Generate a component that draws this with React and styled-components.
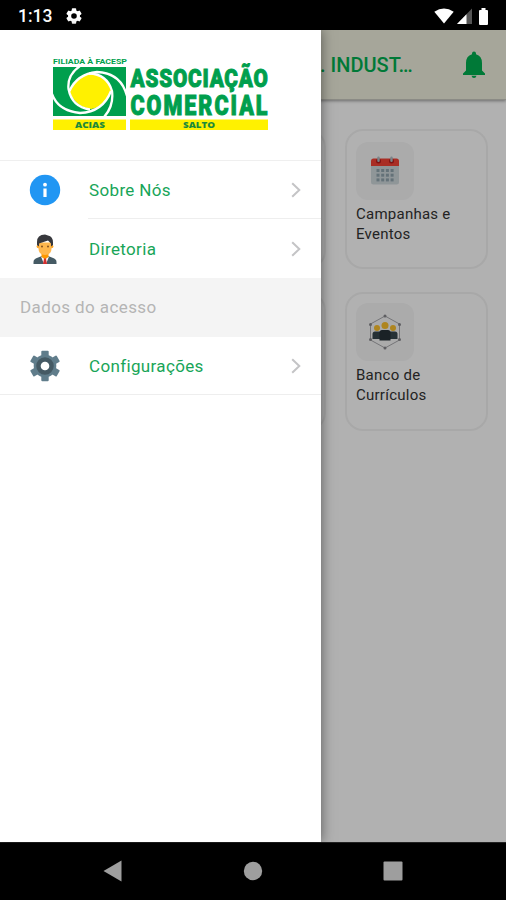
import React from 'react'
import styled, { createGlobalStyle } from 'styled-components'

const GlobalStyle = createGlobalStyle`
  * {
    box-sizing: border-box;
  }
  body {
    margin: 0;
    background: #000;
    font-family: Roboto, 'Liberation Sans', sans-serif;
  }
`

const Phone = styled.div`
  display: flex;
  flex-direction: column;
  width: 506px;
  height: 900px;
  overflow: hidden;
  background: #000;
`

const StatusBar = styled.header`
  display: flex;
  align-items: center;
  flex: 0 0 30px;
  padding: 2px 16px 0 18px;
  color: #fff;
`

const Clock = styled.span`
  width: 48px;
  font-size: 17.5px;
  font-weight: 500;
  line-height: 28px;
`

const StatusIcons = styled.div`
  display: flex;
  align-items: center;
  gap: 2.5px;
  margin-left: auto;
`

const Screen = styled.div`
  position: relative;
  flex: 1;
  background: #fff;
`

const AppBar = styled.div`
  display: flex;
  align-items: center;
  justify-content: flex-end;
  height: 70px;
  padding-right: 20px;
  background: #eff0de;
  border-bottom: 1px solid #c8c8c0;
  box-shadow: 0 1px 3px rgba(0, 0, 0, 0.4);
`

const AppTitle = styled.h1`
  width: 93px;
  margin: 0 49px 0 0;
  color: #00af50;
  font-size: 20px;
  font-weight: 500;
  line-height: 24px;
  white-space: nowrap;
`

const Cards = styled.div`
  display: grid;
  grid-template-columns: repeat(3, 143px);
  grid-template-rows: 140px 139px;
  justify-content: end;
  gap: 23px 19px;
  padding: 29px 18px;
`

const Card = styled.div`
  padding: ${p => (p.$tight ? 10 : 12)}px 9px;
  border: 2px solid #f3f3f3;
  border-radius: 18px;
`

const CardIcon = styled.div`
  display: flex;
  align-items: center;
  justify-content: center;
  width: 58px;
  height: 58px;
  margin: -1px 0 5px 0;
  border-radius: 12px;
  background: #f6f6f7;
`

const CardLabel = styled.div`
  color: #333;
  font-size: 15px;
  line-height: 19.5px;
  letter-spacing: 0.25px;
`

const Scrim = styled.div`
  position: absolute;
  inset: 0;
  background: rgba(0, 0, 0, 0.305);
`

const Drawer = styled.aside`
  position: absolute;
  top: 0;
  bottom: 0;
  left: 0;
  width: 320.5px;
  background: #fff;
  box-shadow: 0 0 12px rgba(0, 0, 0, 0.5);
`

const LogoArea = styled.div`
  height: 131px;
  padding: 22px 0 0 50px;
  border-bottom: 1px solid #efefef;
`

const Row = styled.div`
  display: flex;
  align-items: center;
  height: ${p => p.$height || 58}px;
  padding-left: 29px;
`

const RowIcon = styled.div`
  display: flex;
  width: 59px;
`

const RowBody = styled.div`
  display: flex;
  align-items: center;
  justify-content: space-between;
  flex: 1;
  height: 100%;
  padding: 1px 20px 0 1px;
  border-bottom: 1px solid ${p => (p.$line ? '#eee' : 'transparent')};
`

const RowLabel = styled.span`
  color: #18a558;
  font-size: 17px;
  letter-spacing: 0.35px;
`

const Section = styled.div`
  height: 59px;
  padding-left: 20px;
  background: #f4f4f4;
  color: #b5b5b5;
  font-size: 17px;
  line-height: 59px;
  letter-spacing: 0.4px;
`

const Divider = styled.div`
  height: 1px;
  background: #eee;
`

const NavBar = styled.nav`
  display: flex;
  align-items: center;
  justify-content: space-between;
  flex: 0 0 58px;
  padding: 0 103px 2px;
  border-top: 1px solid #222;
`

const teeth = [0, 60, 120, 180, 240, 300]

const SettingsDot = () => (
  <svg width="16" height="16" viewBox="0 0 16 16">
    <g fill="#fff">
      {teeth.map(a => (
        <rect key={a} x="5.8" y="0.3" width="4.4" height="4" rx="0.8" transform={`rotate(${a} 8 8)`} />
      ))}
    </g>
    <circle cx="8" cy="8" r="4.4" fill="none" stroke="#fff" strokeWidth="3.2" />
  </svg>
)

const Wifi = () => (
  <svg width="20" height="16" viewBox="0 0 20 16">
    <path d="M0.3 3.8Q10-2.8 19.7 3.8L10 15.6Z" fill="#fff" />
  </svg>
)

const Signal = () => (
  <svg width="15" height="16" viewBox="0 0 15 16">
    <path d="M0 16L15 0.5V16Z" fill="#555" />
    <path d="M0 16L9.5 6.2V16Z" fill="#fff" />
  </svg>
)

const Battery = () => (
  <svg width="16" height="17" viewBox="0 0 16 17">
    <path d="M7.500 0h4v2h1.500q1 0 1 1v13q0 1-1 1H6q-1 0-1-1V3q0-1 1-1h1.500Z" fill="#fff" />
  </svg>
)

const Bell = () => (
  <svg width="24" height="28" viewBox="0 0 24 28">
    <path d="M12 0.500q2 0 2 2v0.800q6 1.700 6 8.700v7.500l3 3V24H1v-1.500l3-3V12q0-7 6-8.700v-0.800q0-2 2-2Z" fill="#00af50" />
    <path d="M9.500 24.800h5q-0.500 2.300-2.500 2.300t-2.500-2.300Z" fill="#00af50" />
  </svg>
)

const Logo = () => (
  <svg width="222" height="84" viewBox="50 52 222 84">
    <defs>
      <clipPath id="emblem">
        <rect x="53" y="67" width="73" height="49" />
      </clipPath>
    </defs>
    <g fill="#009f4d" fontFamily="Roboto, sans-serif" fontWeight="900">
      <text x="53" y="64" fontSize="7.500" fontWeight="700" textLength="74" lengthAdjust="spacingAndGlyphs">FILIADA À FACESP</text>
      <rect x="53" y="67" width="73" height="49" />
      <g stroke="#009f4d" strokeWidth="1">
        <text x="130.500" y="87" fontSize="26.500" letterSpacing="1" textLength="138" lengthAdjust="spacingAndGlyphs">ASSOCIAÇÃO</text>
        <text x="130.500" y="115" fontSize="27" letterSpacing="2.500" textLength="139" lengthAdjust="spacingAndGlyphs">COMERCIAL</text>
      </g>
    </g>
    <g clipPath="url(#emblem)">
      <path d="M69.500 92Q76 77 89 73.500Q105 72 111.500 91Q104 107 91 109Q76 107 69.500 92Z" fill="#fff100" />
      <g fill="none" stroke="#fff" strokeWidth="2.300">
        <path d="M80 66Q67 75 68.500 89Q72 107 90 109.500" />
        <path d="M52 94Q58 111 80 113Q103 112 111 91" />
        <path d="M69.500 91Q77 74 97 72Q121 73 127 96" />
        <path d="M89 73.500Q107 74 112 91Q114 106 104 117" />
      </g>
    </g>
    <rect x="53" y="119.500" width="73" height="10.500" fill="#fff100" />
    <rect x="130" y="119.500" width="138" height="10.500" fill="#fff100" />
    <g fill="#1d8a3a" fontFamily="'Open Sans', sans-serif" fontWeight="800" fontSize="9.500">
      <text x="75" y="128.300" textLength="30" lengthAdjust="spacingAndGlyphs">ACIAS</text>
      <text x="183" y="128.300" textLength="32" lengthAdjust="spacingAndGlyphs">SALTO</text>
    </g>
  </svg>
)

const Info = () => (
  <svg width="32" height="32" viewBox="0 0 32 32">
    <circle cx="16" cy="16" r="15.200" fill="#2196f3" />
    <rect x="14.400" y="14.500" width="3.200" height="8.500" fill="#fff" />
    <circle cx="16" cy="10.700" r="1.900" fill="#fff" />
  </svg>
)

const Manager = () => (
  <svg width="32" height="32" viewBox="0 0 32 32">
    <path d="M4.500 31v-2q0-3 4-4.200L13 23h6l4.500 1.800q4 1.200 4 4.200v2Z" fill="#455a64" />
    <path d="M12.500 20h7v4L16 27.500 12.500 24Z" fill="#ff9800" />
    <path d="M12 23.500L15 31h2l3-7.500-4 3Z" fill="#fff" />
    <path d="M15 25.500h2l1 5.500h-4Z" fill="#d32f2f" />
    <circle cx="9.300" cy="13.500" r="1.700" fill="#ffa726" />
    <circle cx="22.700" cy="13.500" r="1.700" fill="#ffa726" />
    <path d="M9.500 9.500h13v6q0 6.500-6.500 6.500T9.500 15.500Z" fill="#ffb74d" />
    <path d="M16 1.500q-8 0-8 7.500v3l2 1.500v-3l9-3 3 3v3l2-1.500V9.500q0-6-5-7Z" fill="#37383d" />
    <circle cx="13" cy="13.500" r="0.900" fill="#784719" />
    <circle cx="19" cy="13.500" r="0.900" fill="#784719" />
  </svg>
)

const Gear = () => (
  <svg width="32" height="32" viewBox="0 0 32 32">
    <g fill="#607d8b">
      {teeth.map(a => (
        <rect key={a} x="12.300" y="0.800" width="7.400" height="8" rx="1" transform={`rotate(${a} 16 16)`} />
      ))}
      <circle cx="16" cy="16" r="11.300" />
    </g>
    <circle cx="16" cy="16" r="6.500" fill="none" stroke="#455a64" strokeWidth="4.500" />
    <circle cx="16" cy="16" r="4.300" fill="#fff" />
  </svg>
)

const Chevron = () => (
  <svg width="10" height="16" viewBox="0 0 10 16">
    <path d="M1.200 1.200L8.300 8L1.200 14.800" fill="none" stroke="#c4c4c6" strokeWidth="2" />
  </svg>
)

const Calendar = () => (
  <svg width="30" height="30" viewBox="0 0 30 30">
    <path d="M1 8h28v18q0 2.500-2.500 2.500h-23Q1 28.500 1 26Z" fill="#cfd8dc" />
    <path d="M1 10V5q0-2.500 2.500-2.500h23Q29 2.500 29 5v5Z" fill="#f44336" />
    <circle cx="8.500" cy="5" r="2.500" fill="#b71c1c" />
    <circle cx="21.500" cy="5" r="2.500" fill="#b71c1c" />
    <rect x="7.300" y="0.500" width="2.400" height="5.500" rx="1.200" fill="#b0bec5" />
    <rect x="20.300" y="0.500" width="2.400" height="5.500" rx="1.200" fill="#b0bec5" />
    <g fill="#90a4ae">
      {[13, 17.7, 22.4].map(y =>
        [6.5, 11.2, 15.9, 20.6].map(x => <rect key={`${x}-${y}`} x={x} y={y} width="3" height="3" />)
      )}
    </g>
  </svg>
)

const People = () => (
  <svg width="32" height="36" viewBox="0 0 32 36">
    <path d="M16 2L30.500 10V26L16 34L1.500 26V10Z" fill="none" stroke="#a9a9ad" strokeWidth="1" />
    <g fill="#88888c">
      <circle cx="16" cy="2" r="1.500" />
      <circle cx="30.500" cy="10.500" r="1.500" />
      <circle cx="30.500" cy="25.500" r="1.500" />
      <circle cx="16" cy="34" r="1.500" />
      <circle cx="1.500" cy="25.500" r="1.500" />
      <circle cx="1.500" cy="10.500" r="1.500" />
    </g>
    <g fill="#fbc02d">
      <circle cx="8" cy="14" r="3" />
      <circle cx="24" cy="14" r="3" />
      <circle cx="16" cy="11.500" r="3.500" />
    </g>
    <path d="M3.500 25v-5q0-2.500 2.500-2.500h20q2.500 0 2.500 2.500v5Z" fill="#37474f" />
    <path d="M10.500 26.500V18.500q0-2.500 2.500-2.500h6q2.500 0 2.500 2.500v8Z" fill="#263238" />
  </svg>
)

const Back = () => (
  <svg width="19" height="22" viewBox="0 0 19 22">
    <path d="M18.500 0.500V21.500L0.500 11Z" fill="#9e9e9e" />
  </svg>
)

const Home = () => (
  <svg width="20" height="20" viewBox="0 0 20 20">
    <circle cx="10" cy="10" r="9.200" fill="#9e9e9e" />
  </svg>
)

const Recents = () => (
  <svg width="20" height="20" viewBox="0 0 20 20">
    <rect x="0.500" y="0.500" width="19" height="19" rx="1" fill="#9e9e9e" />
  </svg>
)

const MenuRow = ({ icon, label, line, height }) => (
  <Row $height={height}>
    <RowIcon>{icon}</RowIcon>
    <RowBody $line={line}>
      <RowLabel>{label}</RowLabel>
      <Chevron />
    </RowBody>
  </Row>
)

const App = () => (
  <>
    <GlobalStyle />
    <Phone>
      <StatusBar>
        <Clock>1:13</Clock>
        <SettingsDot />
        <StatusIcons>
          <Wifi />
          <Signal />
          <Battery />
        </StatusIcons>
      </StatusBar>
      <Screen>
        <AppBar>
          <AppTitle>. INDUST…</AppTitle>
          <Bell />
        </AppBar>
        <Cards>
          <Card />
          <Card />
          <Card>
            <CardIcon><Calendar /></CardIcon>
            <CardLabel>Campanhas e Eventos</CardLabel>
          </Card>
          <Card />
          <Card />
          <Card $tight>
            <CardIcon><People /></CardIcon>
            <CardLabel>Banco de Currículos</CardLabel>
          </Card>
        </Cards>
        <Scrim />
        <Drawer>
          <LogoArea>
            <Logo />
          </LogoArea>
          <MenuRow icon={<Info />} label="Sobre Nós" line />
          <MenuRow icon={<Manager />} label="Diretoria" height={59} />
          <Section>Dados do acesso</Section>
          <MenuRow icon={<Gear />} label="Configurações" height={57} />
          <Divider />
        </Drawer>
      </Screen>
      <NavBar>
        <Back />
        <Home />
        <Recents />
      </NavBar>
    </Phone>
  </>
)

export default App
